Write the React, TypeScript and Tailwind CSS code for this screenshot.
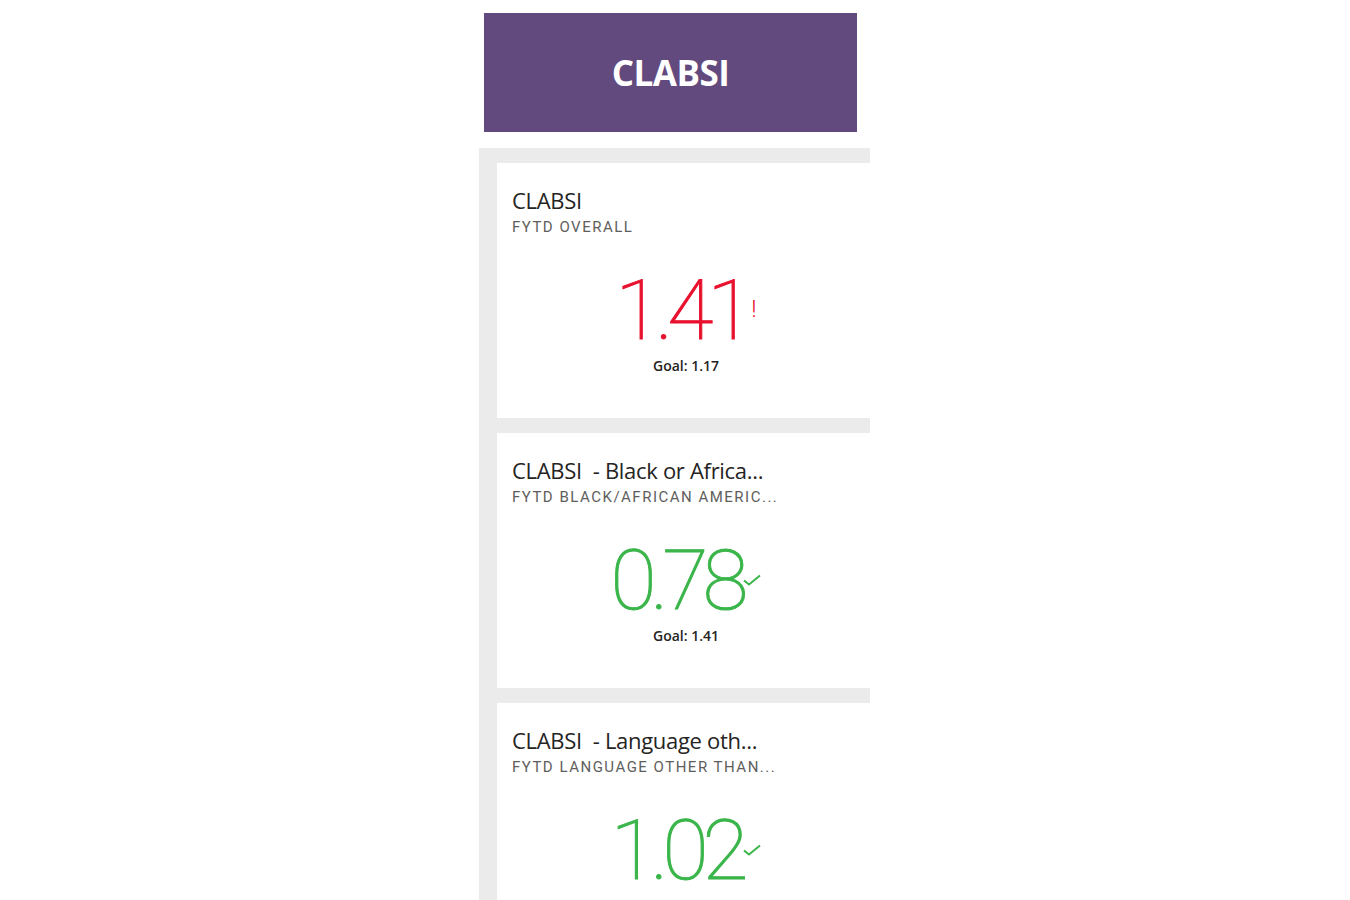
import React from "react";

type Kpi = {
  title: string;
  subtitle: string;
  value: string;
  goal: string;
  ok: boolean;
};

const kpis: Kpi[] = [
  { title: "CLABSI", subtitle: "FYTD OVERALL", value: "1.41", goal: "1.17", ok: false },
  { title: "CLABSI  - Black or Africa...", subtitle: "FYTD BLACK/AFRICAN AMERIC...", value: "0.78", goal: "1.41", ok: true },
  { title: "CLABSI  - Language oth...", subtitle: "FYTD LANGUAGE OTHER THAN...", value: "1.02", goal: "1.17", ok: true },
];

function Check() {
  return (
    <svg width="18" height="12" viewBox="0 0 18 12" fill="none" className="mb-[31px] ml-[1px]">
      <path d="M1 6.5 L6 10.5 L17 1.5" stroke="#3ab54a" strokeWidth="2" />
    </svg>
  );
}

function KpiCard({ kpi }: { kpi: Kpi }) {
  const color = kpi.ok ? "text-[#3ab54a]" : "text-[#e8112d]";
  return (
    <div className="w-[373px] h-[255px] shrink-0 bg-white pl-[15px] pt-[23px] flex flex-col">
      <div className="text-[22px] leading-[28px] text-[#252423] font-['Open_Sans',sans-serif] whitespace-pre tracking-[-0.3px]">
        {kpi.title}
      </div>
      <div className="text-[15px] leading-[20px] text-[#605e5c] font-['Roboto',sans-serif] tracking-[1.5px] mt-[3px]">
        {kpi.subtitle}
      </div>
      <div className="mt-[38px] flex flex-col items-center pr-[10px]">
        <div className={`flex items-end ${color} h-[72px]`}>
          <span className="text-[84px] leading-[72px] font-thin font-['Roboto',sans-serif] tracking-[-6px] [-webkit-text-stroke:1px_currentColor]">
            {kpi.value}
          </span>
          {kpi.ok ? (
            <Check />
          ) : (
            <span className="text-[24px] leading-[24px] mb-[26px] ml-[4px] font-light font-['Roboto',sans-serif]">!</span>
          )}
        </div>
        <div className="text-[14px] leading-[18px] text-[#252423] font-semibold font-['Open_Sans',sans-serif] mt-[10px]">
          Goal: {kpi.goal}
        </div>
      </div>
    </div>
  );
}

export default function App() {
  return (
    <div className="w-[1350px] h-[900px] overflow-hidden bg-white pt-[13px] pl-[479px]">
      <div className="ml-[5px] w-[373px] h-[119px] bg-[#624a7e] flex items-center justify-center">
        <span className="text-white text-[35px] font-bold font-['Open_Sans',sans-serif] tracking-[-0.5px] mt-[2px]">CLABSI</span>
      </div>
      <div className="mt-[16px] w-[391px] bg-[#ebebeb] pl-[18px] pt-[15px] flex flex-col gap-[15px] h-[800px]">
        {kpis.map((k) => (
          <KpiCard key={k.value} kpi={k} />
        ))}
      </div>
    </div>
  );
}
